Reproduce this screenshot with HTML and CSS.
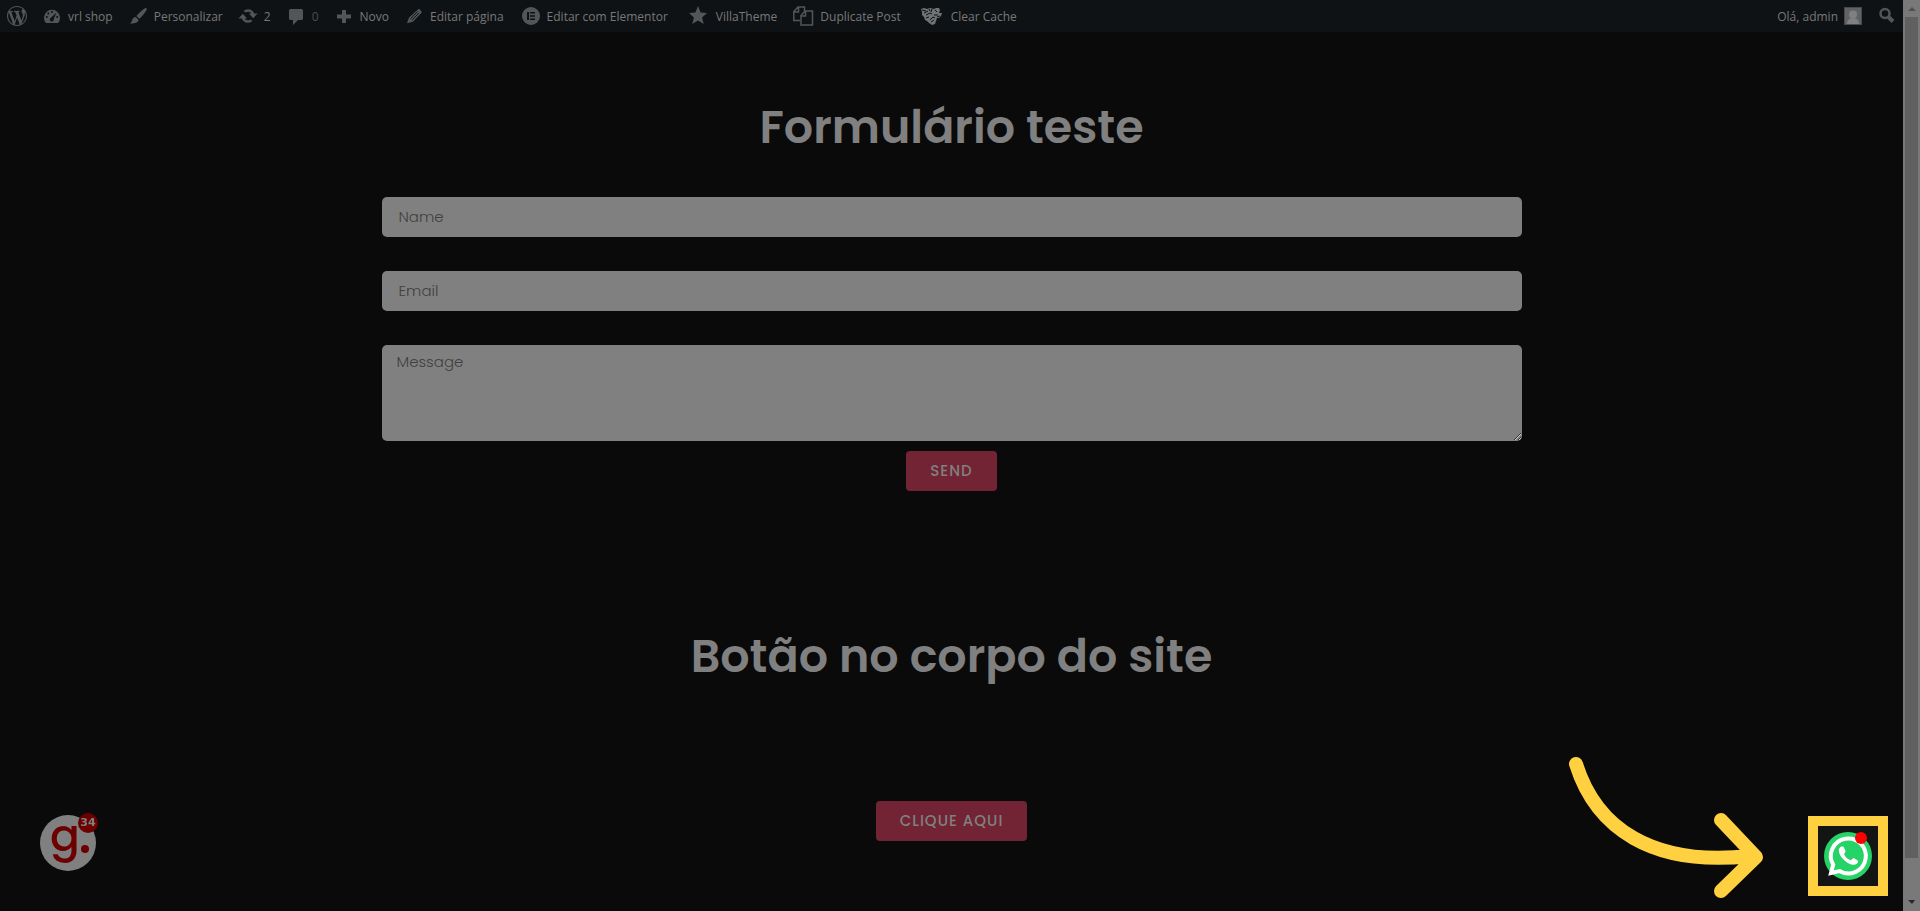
FILE: index.html
```html
<!DOCTYPE html>
<html lang="pt-BR">
<head>
    <meta charset="UTF-8">
    <meta name="viewport" content="width=device-width, initial-scale=1.0">
    <title>vrl shop</title>
    <link rel="stylesheet" href="styles.css">
</head>
<body>
    <div class="page">
        <div class="content">
            <nav class="adminbar">
                <a class="item" href="#" aria-label="WordPress">
                    <svg class="icon" viewBox="0 0 20 20"><path d="M20 10c0-5.51-4.49-10-10-10C4.48 0 0 4.49 0 10c0 5.52 4.48 10 10 10 5.51 0 10-4.48 10-10zM7.78 15.37L4.37 6.22c.55-.02 1.17-.08 1.17-.08.5-.06.44-1.13-.06-1.11 0 0-1.45.11-2.37.11-.18 0-.37 0-.58-.01C4.12 2.69 6.87 1.11 10 1.11c2.33 0 4.45.87 6.05 2.34-.68-.11-1.65.39-1.65 1.58 0 .74.45 1.36.9 2.1.35.61.55 1.36.55 2.46 0 1.49-1.4 5-1.4 5l-3.03-8.37c.54-.02.82-.17.82-.17.5-.05.44-1.25-.06-1.22 0 0-1.44.12-2.38.12-.87 0-2.33-.12-2.33-.12-.5-.03-.56 1.2-.06 1.22l.92.08 1.26 3.41zM17.41 10c.24-.64.74-1.87.43-4.25.7 1.29 1.05 2.71 1.05 4.25 0 3.29-1.73 6.24-4.4 7.78.97-2.59 1.94-5.2 2.92-7.78zM6.1 18.09C3.12 16.65 1.11 13.53 1.11 10c0-1.3.23-2.48.72-3.59C3.25 10.3 4.67 14.2 6.1 18.09zm4.03-6.63l2.58 6.98c-.86.29-1.76.45-2.71.45-.79 0-1.57-.11-2.29-.33.81-2.38 1.62-4.74 2.42-7.1z"/></svg>
                </a>
                <a class="item" href="#">
                    <svg class="icon" viewBox="0 0 20 20"><path d="M4 17a8 8 0 1 1 12 0z"/><g class="cut"><circle cx="10" cy="6" r="1"/><circle cx="6.300" cy="7.500" r="1"/><circle cx="4.800" cy="11" r="1"/><circle cx="15.200" cy="11" r="1"/><path d="M14.500 6.500L11.700 13a2 2 0 1 1-2.700-1.300z"/></g></svg>
                    vrl shop
                </a>
                <a class="item" href="#">
                    <svg class="icon" viewBox="0 0 20 20"><path d="M18.300 2.200c.8.700.5 1.600-.3 2.900-1.600 2.600-4.600 6.100-6.700 7.600L8.500 10c1.900-2.500 4.900-5.300 7.300-7 1.200-.8 1.900-1.300 2.500-.8zM7.700 10.900l2.700 2.700c.2 2.600-2.700 4.400-8.600 3.600 2-.7 1.900-2 2.500-3.700.6-1.700 1.800-2.600 3.400-2.600z"/></svg>
                    Personalizar
                </a>
                <a class="item" href="#">
                    <svg class="icon" viewBox="0 0 20 20"><path d="M10.200 3.300c2.800 0 5.100 1.700 6 4.200H19.500l-4.300 4.700-4.300-4.700h2.400a3.700 3.700 0 0 0-5.700-.9L5.500 4.900a6.600 6.600 0 0 1 4.700-1.600zM9.800 16.700c-2.800 0-5.100-1.700-6-4.200H.5l4.300-4.700 4.300 4.700H6.700a3.700 3.700 0 0 0 5.700.9l2.100 1.700a6.600 6.600 0 0 1-4.700 1.600z"/></svg>
                    2
                </a>
                <a class="item muted" href="#">
                    <svg class="icon" viewBox="0 0 20 20"><path d="M4.500 3h11A1.500 1.500 0 0 1 17 4.500v8a1.500 1.500 0 0 1-1.500 1.500H12l-5 5v-5H4.500A1.500 1.500 0 0 1 3 12.500v-8A1.500 1.500 0 0 1 4.500 3z"/></svg>
                    0
                </a>
                <a class="item" href="#">
                    <svg class="icon" viewBox="0 0 20 20"><path d="M17 8.500v4h-5V17H8v-4.500H3v-4h5V4h4v4.500z"/></svg>
                    Novo
                </a>
                <a class="item" href="#">
                    <svg class="icon" viewBox="0 0 20 20"><path d="M13.900 3.400c.5-.5 1.300-.5 1.800 0l1.600 1.800c.5.500.5 1.200 0 1.700l-8.400 8.900L3 17.300l1.900-5.500z"/><path class="cutline" d="M6.500 12.800l7-7.300M8 14.200l7-7.300"/></svg>
                    Editar página
                </a>
                <a class="item elementor" href="#">
                    <svg class="icon" viewBox="-1 -1 20 20"><circle cx="9" cy="9" r="9"/><path class="cut" d="M5 5h2v8H5zM8 5h5v1.500H8zM8 8.200h5v1.500H8zM8 11.500h5V13H8z"/></svg>
                    Editar com Elementor
                </a>
                <a class="item plugin" href="#">
                    <svg class="icon" viewBox="0 0 20 20"><path d="M10 0l2.600 6.500 6.400.5-4.900 4.500 1.600 6.500-5.700-3.500L4.300 18l1.600-6.500L1 7l6.400-.5z"/></svg>
                    VillaTheme
                </a>
                <a class="item" href="#">
                    <svg class="icon wide" viewBox="0 0 22 20"><path class="line" d="M8 14.500H1.800V5.500L6 1h6.500v4M1.800 6H6.500V1M9 19V9.500L13 5h7.500v14zM9 10h4.500V5"/></svg>
                    Duplicate Post
                </a>
                <a class="item plugin" href="#">
                    <svg class="icon wide tiger" viewBox="0 0 22 18"><path d="M0 2l3-1 3 1 3-1 4 1 2-1 3 0 1 2-1 3 3 0-1 3-2 2-2 0-1 3-1 3-3 1-3-2-2-2-2-1-1-3-2-2 0-3z"/><path class="cutline" d="M1 3l4 1M3 6l4-2M8 2l1 2M11 2l-1 3M14 3l2 2M5 8l4-2 2 1M5 11l3-1M13 8l4 0M9 13l3-3 2 1M10 15l3-2M16 10l3-1"/></svg>
                    Clear Cache
                </a>
                <a class="item account" href="#">
                    Olá, admin
                    <svg class="avatar" viewBox="0 0 18 18"><path class="frame" d="M0 0h18v18H0z"/><path class="photo" d="M1 1h16v16H1z"/><circle class="person" cx="9" cy="7.500" r="4"/><path class="person" d="M3 17c0-4 3-6 6-6s6 2 6 6z"/></svg>
                </a>
                <a class="item search" href="#" aria-label="Pesquisar">
                    <svg class="icon" viewBox="0 0 20 20"><circle class="lens" cx="8" cy="7.500" r="4.500"/><path class="handle" d="M11.500 11l4.500 4.500"/></svg>
                </a>
            </nav>

            <main class="main">
                <h1 class="title">Formulário teste</h1>
                <form class="form">
                    <input class="field" type="text" placeholder="Name" aria-label="Name">
                    <input class="field" type="email" placeholder="Email" aria-label="Email">
                    <textarea class="field message" placeholder="Message" aria-label="Message"></textarea>
                    <button class="button" type="button">SEND</button>
                </form>
                <h1 class="title second">Botão no corpo do site</h1>
                <a class="button" href="#">CLIQUE AQUI</a>
            </main>
        </div>

        <div class="scrollbar">
            <svg class="step" viewBox="0 0 17 17"><path class="up" d="M5 11l4-4 4 4z"/></svg>
            <div class="thumb"></div>
            <svg class="step" viewBox="0 0 17 17"><path d="M5 6h7l-3 4z"/></svg>
        </div>
    </div>

    <a class="grader" href="#">
        <span class="letter">g</span>
        <span class="period"></span>
        <span class="count">34</span>
    </a>

    <svg class="arrow" viewBox="0 0 196 142"><path d="M8 8C28 72 84 111 182 100M153 64l35 37-35 34"/></svg>

    <a class="whatsapp" href="#" aria-label="WhatsApp">
        <svg class="logo" viewBox="0 0 48 48"><circle class="disc" cx="24" cy="24" r="24"/><path class="bubble" d="M9.200 32.800a17.500 17.500 0 1 1 6.300 6.300L7 41z"/><path class="phone" d="M17.500 14.500c-1.500.2-3 2.300-2.600 5 1 6.200 8.500 13 14.600 13.300 2.500.1 4.500-1.600 4.600-3.600 0-.8-4-3.200-5-2.900-1 .3-1.500 2.200-2.500 2-2.500-.8-5.500-3.500-6.500-6-.2-.9 1.500-1.600 1.400-2.800-.2-1.500-1.600-5-2.600-5z"/></svg>
        <span class="dot"></span>
    </a>
</body>
</html>
```
FILE: styles.css
```css
* {
    box-sizing: border-box;
}
body {
    margin: 0;
    background-color: #0a0a0a;
    font-family: Poppins, Inter, sans-serif;
}
a {
    text-decoration: none;
}
.page {
    display: flex;
    min-height: 100vh;
}
.content {
    flex: 1;
}
.adminbar {
    display: flex;
    height: 32px;
    background-color: #0f1214;
    font-family: "Segoe UI", "Open Sans", sans-serif;
    font-size: 12px;
}
.item {
    display: flex;
    align-items: center;
    gap: 6px;
    padding: 0 8px 0 7px;
    color: #787878;
    white-space: nowrap;
}
.elementor {
    padding-left: 9px;
}
.plugin {
    padding-left: 12px;
    gap: 8px;
}
.muted {
    color: #4a4c4e;
}
.account {
    margin-left: auto;
}
.search {
    padding-right: 6px;
}
.icon {
    width: 20px;
    height: 20px;
    fill: #535658;
}
.wide {
    width: 22px;
}
.tiger {
    fill: #707274;
}
.cut {
    fill: #0f1214;
}
.cutline {
    fill: none;
    stroke: #0f1214;
    stroke-width: 1;
}
.line {
    fill: none;
    stroke: #535658;
    stroke-width: 1.5;
}
.lens, .handle {
    fill: none;
    stroke: #535658;
    stroke-width: 2.5;
}
.handle {
    stroke-width: 4;
}
.avatar {
    width: 18px;
    height: 18px;
}
.frame {
    fill: #464a4d;
}
.photo {
    fill: #626262;
}
.person {
    fill: #808080;
}
.main {
    display: flex;
    flex-direction: column;
    align-items: center;
    padding: 71px 16px 0;
}
.title {
    margin: 0;
    color: #808080;
    font-size: 46px;
    font-weight: 600;
    line-height: 48px;
}
.form {
    display: flex;
    flex-direction: column;
    align-items: center;
    width: 100%;
    max-width: 1140px;
    margin-top: 46px;
}
.field {
    width: 100%;
    height: 40px;
    margin: 0 0 34px;
    padding: 0 17px 2px;
    border: 0;
    border-radius: 5px;
    background-color: #808080;
    color: #3d3d3d;
    font-family: inherit;
    font-size: 15px;
    font-weight: 300;
}
.field::placeholder {
    color: #404040;
}
.message {
    height: 96px;
    margin-bottom: 10px;
    padding: 5px 15px;
}
.button {
    display: flex;
    align-items: center;
    height: 40px;
    padding: 0 24px 2px;
    border: 0;
    border-radius: 4px;
    background-color: #722434;
    color: #808080;
    font-family: inherit;
    font-size: 15px;
    font-weight: 500;
    letter-spacing: 1px;
}
.second {
    margin: 141px 0 121px;
}
.scrollbar {
    display: flex;
    flex-direction: column;
    width: 17px;
    background-color: #797979;
}
.step {
    width: 17px;
    height: 17px;
    fill: #282828;
}
.up {
    fill: #505050;
}
.thumb {
    flex: 1;
    margin: 0 2px 36px;
    background-color: #606060;
}

/* floating widgets */
.grader {
    position: fixed;
    left: 40px;
    bottom: 40px;
    display: flex;
    align-items: flex-start;
    width: 56px;
    height: 56px;
    padding-left: 10px;
    border-radius: 50%;
    background-color: #808080;
    color: #6c0000;
}
.letter {
    font-size: 44px;
    font-weight: 500;
    line-height: 42px;
}
.period {
    width: 8px;
    height: 8px;
    margin: 30px 0 0 1px;
    border-radius: 50%;
    background-color: #6c0000;
}
.count {
    position: absolute;
    top: -2px;
    right: -2px;
    width: 20px;
    height: 20px;
    border-radius: 50%;
    background-color: #6c0000;
    color: #808080;
    font-family: "DejaVu Sans", sans-serif;
    font-size: 11px;
    font-weight: bold;
    line-height: 20px;
    text-align: center;
}
.arrow {
    position: fixed;
    right: 156px;
    bottom: 13px;
    width: 196px;
    height: 142px;
    fill: none;
    stroke: #ffd040;
    stroke-width: 14;
    stroke-linecap: round;
    stroke-linejoin: round;
}
.whatsapp {
    position: fixed;
    right: 32px;
    bottom: 15px;
    display: flex;
    padding: 6px;
    border: 10px solid #ffd040;
    background-color: #141414;
}
.logo {
    width: 48px;
    height: 48px;
}
.disc {
    fill: #25d366;
}
.bubble {
    fill: none;
    stroke: #fff;
    stroke-width: 4;
}
.phone {
    fill: #fff;
}
.dot {
    position: absolute;
    top: 6px;
    right: 11px;
    width: 12px;
    height: 12px;
    border-radius: 50%;
    background-color: #f00;
}
```
